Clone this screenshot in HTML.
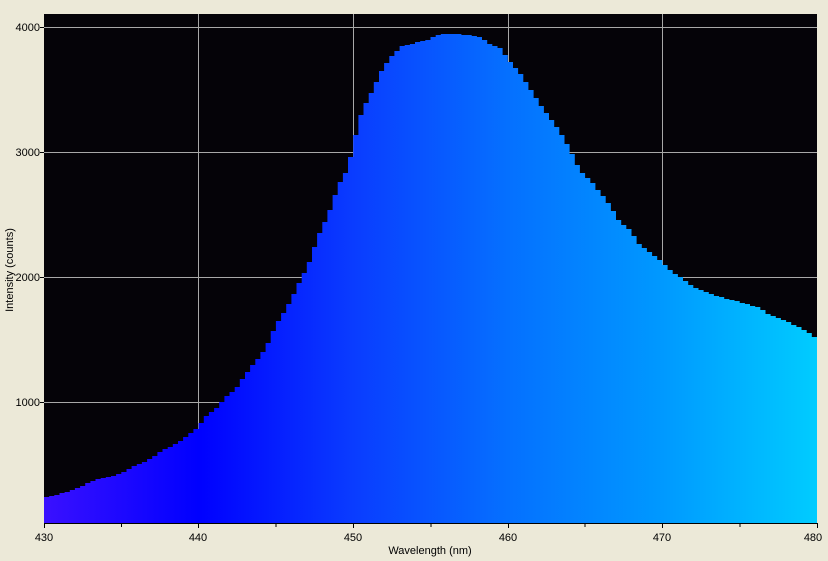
<!DOCTYPE html>
<html><head><style>
body{margin:0;width:828px;height:561px;background:#ece9d8;overflow:hidden;font-family:"Liberation Sans",sans-serif}
svg{position:absolute;left:0;top:0}
text{font-family:"Liberation Sans",sans-serif;font-size:11px;fill:#000}
</style></head><body>
<svg width="828" height="561" viewBox="0 0 828 561">
<defs>
<linearGradient id="g" x1="44" x2="817" y1="0" y2="0" gradientUnits="userSpaceOnUse">
<stop offset="0" stop-color="#3a10ff"/>
<stop offset="0.2" stop-color="#0000ff"/>
<stop offset="0.4" stop-color="#0a3cff"/>
<stop offset="0.6" stop-color="#0570ff"/>
<stop offset="0.8" stop-color="#0099ff"/>
<stop offset="1" stop-color="#00ccff"/>
</linearGradient>
</defs>
<rect x="44" y="14" width="773" height="509" fill="#050308"/>
<g stroke="#a8a8a8" stroke-width="1">
<line x1="44" x2="817" y1="27.5" y2="27.5"/>
<line x1="44" x2="817" y1="152.5" y2="152.5"/>
<line x1="44" x2="817" y1="277.5" y2="277.5"/>
<line x1="44" x2="817" y1="402.5" y2="402.5"/>
<line x1="198.5" x2="198.5" y1="14" y2="523"/>
<line x1="353.5" x2="353.5" y1="14" y2="523"/>
<line x1="508.5" x2="508.5" y1="14" y2="523"/>
<line x1="662.5" x2="662.5" y1="14" y2="523"/>
</g>
<polygon id="sp" fill="url(#g)" points="44,523 44,498 50,496 60,494 70,491 80,487 90,482 100,478 110,477 120,474 130,468 140,464 150,459 160,452 170,447 180,441 190,434 198,428 205,417 215,410 225,398 235,390 245,375 255,362 265,350 275,327 285,311 292,298 300,281 310,261 318,236 328,216 338,186 348,168 355,138 362,111 372,92 382,70 392,56 402,46 415,43 425,41 440,34 460,34 480,37 490,44 500,48 510,62 520,73 530,88 540,104 550,118 560,131 570,150 580,170 590,180 600,192 610,205 620,222 630,230 640,245 650,252 660,260 670,270 680,277 690,285 700,290 710,294 720,297 730,300 740,302 750,305 760,308 770,315 780,318 790,323 800,327 810,334 817,338 817,523"/>
<g stroke="#000" stroke-width="1">
<line x1="44" x2="818" y1="523.5" y2="523.5"/>
<line x1="44.5" x2="44.5" y1="523" y2="528"/>
<line x1="121.5" x2="121.5" y1="523" y2="527"/>
<line x1="198.5" x2="198.5" y1="523" y2="528"/>
<line x1="276" x2="276" y1="523" y2="527"/>
<line x1="353.5" x2="353.5" y1="523" y2="528"/>
<line x1="431" x2="431" y1="523" y2="527"/>
<line x1="508.5" x2="508.5" y1="523" y2="528"/>
<line x1="585" x2="585" y1="523" y2="527"/>
<line x1="662.5" x2="662.5" y1="523" y2="528"/>
<line x1="740" x2="740" y1="523" y2="527"/>
<line x1="817.5" x2="817.5" y1="523" y2="528"/>
<line x1="40" x2="44" y1="27.5" y2="27.5"/>
<line x1="40" x2="44" y1="152.5" y2="152.5"/>
<line x1="40" x2="44" y1="277.5" y2="277.5"/>
<line x1="40" x2="44" y1="402.5" y2="402.5"/>
</g>
<g text-anchor="end">
<text x="40" y="31">4000</text>
<text x="40" y="156">3000</text>
<text x="40" y="281">2000</text>
<text x="40" y="406">1000</text>
</g>
<g text-anchor="middle">
<text x="44" y="541">430</text>
<text x="198" y="541">440</text>
<text x="353" y="541">450</text>
<text x="508" y="541">460</text>
<text x="662" y="541">470</text>
<text x="813" y="541">480</text>
<text x="430" y="554">Wavelength (nm)</text>
<text transform="translate(13,270) rotate(-90)">Intensity (counts)</text>
</g>
</svg>
<script>
(function(){
var p=document.getElementById('sp');
var pts=p.getAttribute('points').trim().split(/\s+/).map(function(s){return s.split(',').map(Number);});
var c=pts.slice(1,pts.length-1);
function f(x){for(var i=0;i<c.length-1;i++){if(x>=c[i][0]&&x<=c[i+1][0]){var t=(x-c[i][0])/(c[i+1][0]-c[i][0]);return c[i][1]+t*(c[i+1][1]-c[i][1]);}}return c[c.length-1][1];}
var w=773/150,out=['44,523'];
for(var k=0;k<150;k++){var x0=44+k*w,x1=x0+w,y=Math.round(f(x0+w/2));out.push(x0.toFixed(1)+','+y);out.push(x1.toFixed(1)+','+y);}
out.push('817,523');
p.setAttribute('points',out.join(' '));
})();
</script>
</body></html>
